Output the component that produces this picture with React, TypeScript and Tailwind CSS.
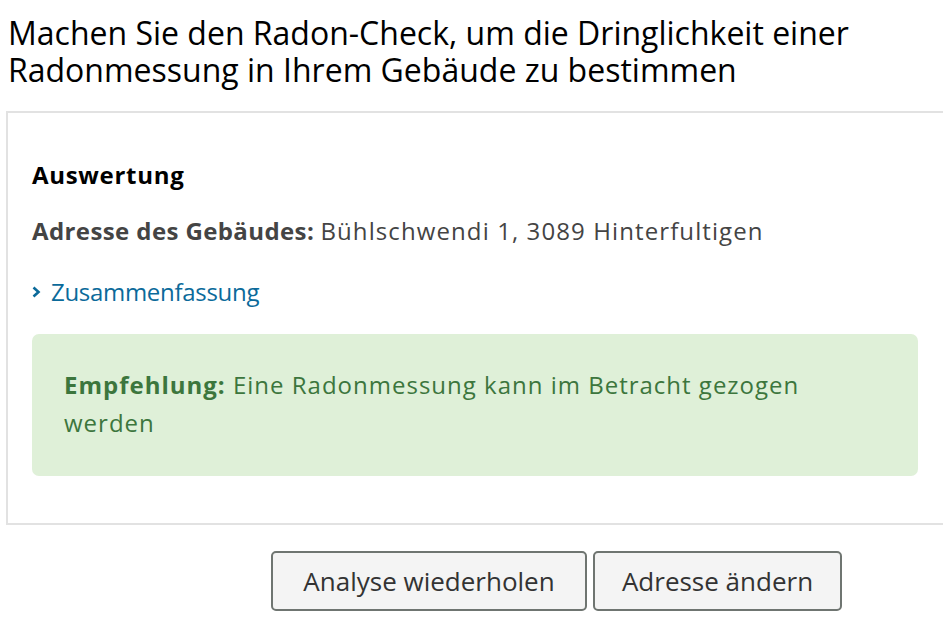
export default function App() {
  return (
    <div className="min-h-[629px] w-[943px] overflow-hidden bg-white font-['Open_Sans',sans-serif] text-[#222]">
      <h1 className="px-2 pt-[14px] text-[32px] leading-[37px] tracking-[0px] text-black">
        Machen Sie den Radon-Check, um die Dringlichkeit einer Radonmessung in Ihrem Gebäude zu bestimmen
      </h1>

      <div className="ml-[6px] mt-[23px] w-[960px] border-2 border-[#e2e2e2] pl-[24px] pr-[40px] pt-[47px] pb-[47px]">
        <h2 className="text-[24px] font-bold leading-[30px] tracking-[0.7px] text-black">Auswertung</h2>

        <p className="mt-[26px] text-[24px] leading-[30px] text-[#444]">
          <span className="font-bold tracking-[0.4px]">Adresse des Gebäudes:</span>{" "}
          <span className="tracking-[1.1px]">Bühlschwendi 1, 3089 Hinterfultigen</span>
        </p>

        <button className="mt-[31px] flex items-center gap-[10px] text-[24px] leading-[30px] tracking-[-0.3px] text-[#0b6a9a]">
          <svg width="9" height="12" viewBox="0 0 9 12" fill="none">
            <path d="M1.5 1.5 L6.5 6 L1.5 10.5" stroke="#0b6a9a" strokeWidth="2.6" />
          </svg>
          Zusammenfassung
        </button>

        <div className="mt-[27px] w-[886px] rounded-[7px] bg-[#dff0d8] px-[32px] pt-[32px] pb-[34px] text-[24px] leading-[38px] text-[#3c763d]">
          <p className="max-w-[780px] tracking-[1px]">
            <span className="font-bold">Empfehlung:</span> Eine Radonmessung kann im Betracht gezogen werden
          </p>
        </div>
      </div>

      <div className="mt-[26px] flex gap-[6px] pl-[271px]">
        <button className="h-[60px] w-[316px] rounded-[5px] border-2 border-[#6f7571] bg-[#f4f4f4] text-[26px] text-[#333]">
          Analyse wiederholen
        </button>
        <button className="h-[60px] w-[249px] rounded-[5px] border-2 border-[#6f7571] bg-[#f4f4f4] text-[26px] text-[#333]">
          Adresse ändern
        </button>
      </div>
    </div>
  );
}
